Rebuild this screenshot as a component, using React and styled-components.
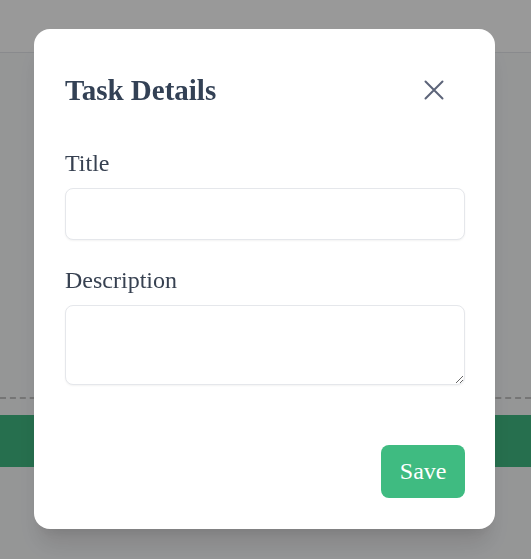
import { createGlobalStyle, styled } from "styled-components";

const GlobalStyle = createGlobalStyle`
  html, body {
    margin: 0;
    padding: 0;
  }

  body {
    font-family: "Liberation Serif", "Times New Roman", serif;
    background-color: #f9fafb;
    height: 559px;
    overflow: hidden;
  }
`;

export default function App() {
  return (
    <>
      <GlobalStyle />
      <SCPage>
        <SCHeader />
        <SCBoard />
        <SCAddBar />
      </SCPage>

      <SCOverlay>
        <SCModal>
          <SCModalHeader>
            <SCTitle>Task Details</SCTitle>
            <SCClose aria-label="Close">
              <svg width="20" height="20" viewBox="0 0 20 20" fill="none">
                <path
                  d="M1.5 1.5L18.5 18.5M18.5 1.5L1.5 18.5"
                  stroke="#5c6479"
                  strokeWidth="2"
                  strokeLinecap="round"
                />
              </svg>
            </SCClose>
          </SCModalHeader>

          <SCField>
            <SCLabel htmlFor="task-title">Title</SCLabel>
            <SCInput id="task-title" type="text" />
          </SCField>

          <SCField>
            <SCLabel htmlFor="task-description">Description</SCLabel>
            <SCTextArea id="task-description" />
          </SCField>

          <SCFooter>
            <SCSaveButton>Save</SCSaveButton>
          </SCFooter>
        </SCModal>
      </SCOverlay>
    </>
  );
}

const SCPage = styled.div`
  display: flex;
  flex-direction: column;
  height: 559px;
`

const SCHeader = styled.header`
  height: 52px;
  flex-shrink: 0;

  background-color: #ffffff;
  border-bottom: 1px solid #e5e7eb;
`

const SCBoard = styled.div`
  height: 344px;
  flex-shrink: 0;

  border-bottom: 2px dashed #c4c4c4;
`

const SCAddBar = styled.div`
  height: 52px;
  margin-top: 16px;

  background-color: #40b982;
`

const SCOverlay = styled.div`
  position: fixed;
  inset: 0;
  padding: 0 2px 1px 0;

  display: flex;
  align-items: center;
  justify-content: center;

  background-color: rgba(0, 0, 0, 0.4);
`

const SCModal = styled.div`
  width: 461px;
  height: 500px;
  box-sizing: border-box;

  padding: 45px 30px 31px 31px;

  display: flex;
  flex-direction: column;

  background-color: #ffffff;
  border-radius: 16px;
  box-shadow: 0 20px 25px -5px rgba(0, 0, 0, 0.12), 0 10px 10px -5px rgba(0, 0, 0, 0.05);
`

const SCModalHeader = styled.div`
  display: flex;
  align-items: center;
  justify-content: space-between;

  height: 32px;
  margin-bottom: 44px;
`

const SCTitle = styled.h2`
  margin: 0;

  font-family: "Liberation Serif", "Times New Roman", serif;
  font-size: 29px;
  font-weight: 700;
  line-height: 32px;

  color: #334155;
`

const SCClose = styled.button`
  width: 36px;
  height: 36px;
  margin-right: 13px;
  padding: 0;

  display: flex;
  align-items: center;
  justify-content: center;

  background: none;
  border: none;
  cursor: pointer;
`

const SCField = styled.div`
  display: flex;
  flex-direction: column;
  gap: 11px;

  & + & {
    margin-top: 27px;
  }
`

const SCLabel = styled.label`
  font-family: "Liberation Serif", "Times New Roman", serif;
  font-size: 24px;
  line-height: 27px;

  color: #374151;
`

const SCInput = styled.input`
  width: 100%;
  height: 52px;
  box-sizing: border-box;
  margin: 0;

  padding: 12px 16px;

  font-family: "Liberation Serif", "Times New Roman", serif;
  font-size: 20px;

  border: 1px solid #e5e7eb;
  border-radius: 8px;
  box-shadow: 0 1px 2px rgba(0, 0, 0, 0.05);
  outline: none;
`

const SCTextArea = styled.textarea`
  display: block;
  width: 100%;
  height: 80px;
  box-sizing: border-box;
  margin: 0;

  padding: 12px 16px;

  font-family: "Liberation Serif", "Times New Roman", serif;
  font-size: 20px;

  border: 1px solid #e5e7eb;
  border-radius: 8px;
  box-shadow: 0 1px 2px rgba(0, 0, 0, 0.05);
  outline: none;
`

const SCFooter = styled.div`
  margin-top: auto;

  display: flex;
  justify-content: flex-end;
`

const SCSaveButton = styled.button`
  height: 53px;
  padding: 0 18.5px;

  font-family: "Liberation Serif", "Times New Roman", serif;
  font-size: 24px;

  color: #ffffff;
  background-color: #3fbb81;
  border: none;
  border-radius: 8px;
  cursor: pointer;
`
